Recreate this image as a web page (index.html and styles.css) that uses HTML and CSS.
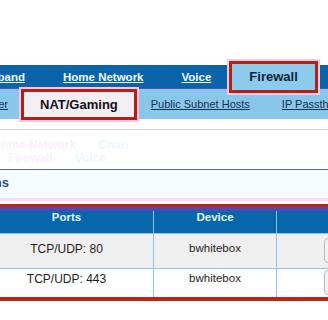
FILE: index.html
```html
<!DOCTYPE html>
<html lang="en">
<head>
    <meta charset="UTF-8">
    <meta name="viewport" content="width=device-width, initial-scale=1.0">
    <title>Firewall - NAT/Gaming</title>
    <link rel="stylesheet" href="styles.css">
</head>
<body>
    <div class="page">
        <nav class="main-nav">
            <div class="edge edge-main"><a href="#" class="nav-link">Broadband</a></div>
            <a href="#" class="nav-link">Home Network</a>
            <a href="#" class="nav-link">Voice</a>
            <span class="nav-tab">Firewall</span>
        </nav>
        <nav class="sub-nav">
            <div class="edge edge-sub"><a href="#" class="sub-link">Packet Filter</a></div>
            <span class="sub-tab">NAT/Gaming</span>
            <a href="#" class="sub-link link-hosts">Public Subnet Hosts</a>
            <a href="#" class="sub-link link-pass">IP Passthrough</a>
        </nav>
        <div class="ghost">
            <div class="ghost-line ghost-one"><span>Home Network</span><span class="ghost-right">Chan</span></div>
            <div class="ghost-line ghost-two"><span>Firewall</span><span class="ghost-right">Voice</span></div>
        </div>
        <div class="section">
            <div class="edge edge-title"><h2 class="section-title">Hosted Applications</h2></div>
        </div>
        <div class="grid-wrap">
            <table class="grid">
                <thead>
                    <tr>
                        <th class="col-ports">Ports</th>
                        <th class="col-device">Device</th>
                        <th></th>
                    </tr>
                </thead>
                <tbody>
                    <tr class="row-odd">
                        <td>TCP/UDP: 80</td>
                        <td>bwhitebox</td>
                        <td><button class="remove">Remove</button></td>
                    </tr>
                    <tr class="row-even">
                        <td>TCP/UDP: 443</td>
                        <td>bwhitebox</td>
                        <td><button class="remove">Remove</button></td>
                    </tr>
                </tbody>
            </table>
        </div>
    </div>
</body>
</html>
```

FILE: styles.css
```css
body {
    font-family: 'Liberation Sans', Arial, sans-serif;
    margin: 0;
    padding: 0;
    background-color: #ffffff;
    color: #222222;
    overflow: hidden;
}
.page {
    width: 328px;
    padding-top: 65px;
}
.edge {
    display: flex;
    justify-content: flex-end;
    white-space: nowrap;
    flex-shrink: 0;
}
.main-nav {
    height: 23px;
    background-color: #0b63a9;
    display: flex;
    align-items: center;
    gap: 38px;
    white-space: nowrap;
    border-bottom: 1px solid #5a4fb0;
}
.edge-main {
    width: 25px;
}
.nav-link {
    color: #f2f8ff;
    font-size: 11.5px;
    font-weight: bold;
    text-decoration: underline;
}
.nav-tab {
    margin-left: -20px;
    flex-shrink: 0;
    height: 26px;
    padding: 0 17px;
    display: flex;
    align-items: center;
    background-color: #8ccbec;
    border: 3px solid #b3240f;
    box-shadow: 0 0 0 2px #f7c6ee;
    color: #10243a;
    font-size: 13px;
    font-weight: bold;
}
.sub-nav {
    height: 30px;
    background-color: #88c7ea;
    display: flex;
    align-items: center;
    white-space: nowrap;
}
.edge-sub {
    width: 8px;
}
.sub-link {
    color: #173150;
    font-size: 11px;
    text-decoration: underline;
    flex-shrink: 0;
}
.sub-tab {
    margin-left: 13px;
    flex-shrink: 0;
    height: 25px;
    padding: 0 16px;
    display: flex;
    align-items: center;
    background-color: #f3eef2;
    border: 3px solid #b8200e;
    box-shadow: 0 0 0 2px #f7c6ee;
    color: #111111;
    font-size: 13px;
    font-weight: bold;
}
.link-hosts {
    margin-left: 14px;
}
.link-pass {
    margin-left: 32px;
}
.ghost {
    margin-top: 10px;
    border-top: 1px solid #d8d0d8;
    border-bottom: 1px solid #56658f;
    padding-top: 9px;
    box-sizing: border-box;
    height: 41px;
}
.ghost-line {
    display: flex;
    font-size: 12px;
    font-weight: bold;
    color: #fdeefb;
    white-space: nowrap;
    line-height: 13px;
}
.ghost-one {
    margin-left: -8px;
}
.ghost-two {
    margin-left: 8px;
}
.ghost-right {
    margin-left: 22px;
    color: #ecfafc;
}
.section {
    background-color: #f5fdfe;
    height: 31px;
    padding-top: 5px;
    border-bottom: 3px solid #ffd9f4;
    box-sizing: border-box;
}
.edge-title {
    width: 9px;
}
.section-title {
    margin: 0;
    font-size: 13px;
    font-weight: bold;
    color: #1d4d8a;
}
.grid-wrap {
    margin-top: 3px;
    margin-left: -20px;
    width: 400px;
    height: 97px;
    border-top: 3px solid #b92a10;
    border-bottom: 4px solid #c3210f;
    overflow: hidden;
    box-sizing: border-box;
}
.grid {
    width: 400px;
    border-collapse: collapse;
    table-layout: fixed;
}
.grid th {
    background-color: #0866aa;
    color: #e4f6ff;
    font-size: 11.5px;
    font-weight: bold;
    height: 22px;
    padding: 0;
    border-top: 4px solid #5446b3;
    border-right: 1px solid #8cc4ee;
    border-bottom: 1px solid #8cc4ee;
    vertical-align: top;
}
.col-ports {
    width: 173px;
}
.col-device {
    width: 122px;
}
.grid td {
    text-align: center;
    vertical-align: top;
    font-size: 12px;
    color: #1e1e1e;
    padding: 8px 0 0 0;
    border-right: 1px solid #8cc4ee;
    border-bottom: 1px solid #8cc4ee;
}
.grid td:nth-child(2) {
    font-size: 11.5px;
}
.row-odd td {
    height: 26px;
    background-color: #efefef;
}
.row-even td {
    height: 26px;
    padding-top: 3px;
    background-color: #ffffff;
}
.grid td:last-child {
    text-align: left;
    padding-left: 47px;
    padding-top: 4px;
}
.row-even td:last-child {
    padding-top: 1px;
}
.remove {
    height: 25px;
    padding: 0 10px;
    font-family: 'Liberation Sans', Arial, sans-serif;
    font-size: 12px;
    background-color: #f2f2f2;
    border: 1px solid #b8b8b8;
    border-radius: 4px;
}
```
